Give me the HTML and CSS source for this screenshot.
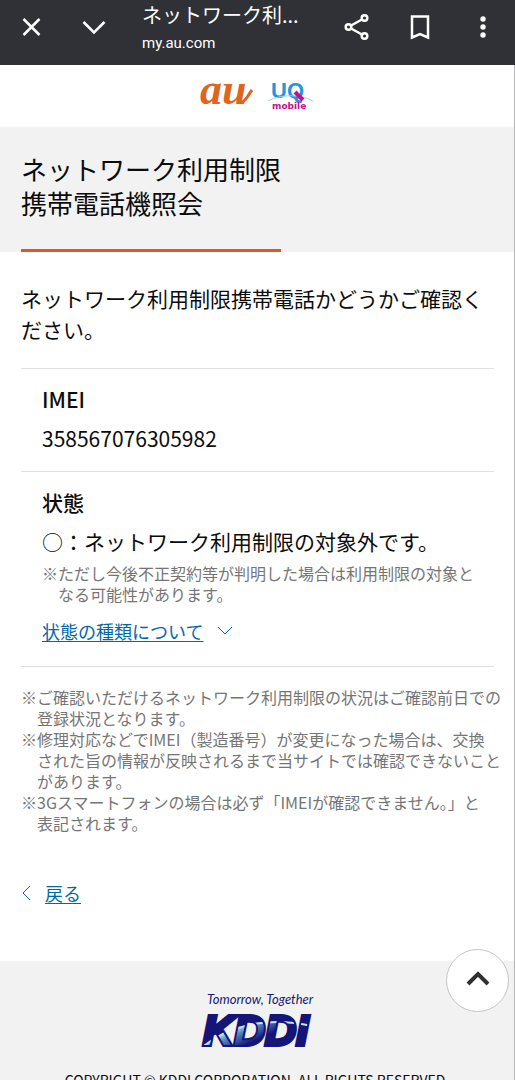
FILE: index.html
```html
<!DOCTYPE html>
<html lang="ja">
<head>
<meta charset="utf-8">
<meta name="viewport" content="width=device-width, initial-scale=1">
<title>ネットワーク利用制限携帯電話機照会</title>
<link rel="stylesheet" href="styles.css">
</head>
<body>
<div class="toolbar">
  <button class="tool" aria-label="閉じる"><svg width="24" height="24" viewBox="0 0 24 24"><path d="M3.500 4L19.500 20M19.500 4L3.500 20"/></svg></button>
  <button class="tool tool-down" aria-label="最小化"><svg width="26" height="24" viewBox="0 0 26 24"><path d="M2.500 7L13 17.500L23.500 7"/></svg></button>
  <div class="page-info">
    <div class="page-name">ネットワーク利...</div>
    <div class="page-host">my.au.com</div>
  </div>
  <div class="tools">
    <button class="tool" aria-label="共有"><svg width="28" height="28" viewBox="0 0 28 28"><path d="M8 12.500L19 6.500M8 15.500L19 21.500"/><circle cx="5.500" cy="14" r="2.800"/><circle cx="21.500" cy="5" r="2.800"/><circle cx="21.500" cy="23" r="2.800"/></svg></button>
    <button class="tool" aria-label="ブックマーク"><svg width="24" height="28" viewBox="0 0 24 28"><path d="M4 3.500H20V24.500L12 21L4 24.500Z"/></svg></button>
    <button class="tool" aria-label="メニュー"><svg class="dots" width="10" height="28" viewBox="0 0 10 28"><circle cx="5" cy="6" r="2.700"/><circle cx="5" cy="14" r="2.700"/><circle cx="5" cy="22" r="2.700"/></svg></button>
  </div>
</div>
<div class="view">
  <header class="brands">
    <svg width="56" height="44" viewBox="0 0 56 44" role="img" aria-label="au"><text class="logo-au" x="0" y="30">au</text><path class="au-tail" d="M41 29C46 27 48 21 52 16"/></svg>
    <svg width="46" height="44" viewBox="0 0 46 44" role="img" aria-label="UQ mobile"><text class="logo-uq" x="3" y="24">UQ</text><path class="uq-line" d="M0 27C12 20 33 20 45 27"/><path class="uq-tail" d="M27 18L35 26"/><text class="logo-mobile" x="4" y="35">mobile</text></svg>
  </header>
  <div class="title-band">
    <h1>ネットワーク利用制限<br>携帯電話機照会</h1>
  </div>
  <main>
    <p class="intro">ネットワーク利用制限携帯電話かどうかご確認ください。</p>
    <dl class="result">
      <div class="item">
        <dt>IMEI</dt>
        <dd>358567076305982</dd>
      </div>
      <div class="item">
        <dt>状態</dt>
        <dd>○：ネットワーク利用制限の対象外です。
          <p class="note">※ただし今後不正契約等が判明した場合は利用制限の対象と<span class="keep">なる</span>可能性があります。</p>
          <a class="kinds" href="#"><span>状態の種類について</span><svg width="16" height="10" viewBox="0 0 16 10"><path d="M1 1L8 8L15 1"/></svg></a>
        </dd>
      </div>
    </dl>
    <ul class="notes">
      <li class="note">※ご確認いただけるネットワーク利用制限の状況はご確認前日での登録状況となります。</li>
      <li class="note">※修理対応などでIMEI（製造番号）が変更になった場合は、交換<span class="keep">された</span>旨の情報が反映されるまで当サイトでは確認できないことがあります。</li>
      <li class="note">※3Gスマートフォンの場合は必ず「IMEIが確認できません。」と<span class="keep">表記</span>されます。</li>
    </ul>
    <a class="back" href="#"><svg width="10" height="16" viewBox="0 0 10 16"><path d="M9 1L2 8L9 15"/></svg><span>戻る</span></a>
  </main>
  <footer>
    <svg width="118" height="56" viewBox="0 0 118 56" role="img" aria-label="Tomorrow, Together KDDI">
      <defs>
        <linearGradient id="glow" gradientUnits="userSpaceOnUse" x1="46" y1="30" x2="55" y2="50"><stop offset="0" stop-color="#b5dcf2"/><stop offset="0.300" stop-color="#5586bf"/><stop offset="0.900" stop-color="#151578"/></linearGradient>
        <clipPath id="wordmark"><text class="logo-kddi" x="5" y="51">KDDI</text></clipPath>
      </defs>
      <text class="tagline" x="9" y="10">Tomorrow, Together</text>
      <text class="logo-kddi" x="5" y="51">KDDI</text>
      <g clip-path="url(#wordmark)">
        <path fill="url(#glow)" d="M3 54C31 31 69 22 114 32V54Z"/>
        <path class="arc" d="M3 54C31 31 69 22 114 32"/>
      </g>
    </svg>
    <small>COPYRIGHT © KDDI CORPORATION, ALL RIGHTS RESERVED.</small>
  </footer>
  <button class="to-top" aria-label="ページの先頭へ"><svg width="26" height="20" viewBox="0 0 26 20"><path d="M3 13L13 3L23 13"/></svg></button>
</div>
</body>
</html>
```
FILE: styles.css
```css
* { box-sizing: border-box; }

body {
  margin: 0;
  height: 100vh;
  display: flex;
  flex-direction: column;
  overflow: hidden;
  background: #fff;
  color: #0c0c0c;
  font-family: "Noto Sans CJK JP", sans-serif;
  font-size: 21px;
}

h1, p, dl, dd, ul { margin: 0; padding: 0; }

button {
  border: 0;
  padding: 0;
  background: none;
  display: flex;
  align-items: center;
  justify-content: center;
}

svg { display: block; flex: none; overflow: visible; }

.toolbar {
  flex: none;
  display: flex;
  align-items: flex-start;
  height: 65px;
  padding: 0 27px 0 20px;
  background: #303136;
  color: #fff;
}

.tool { height: 54px; }
.tool-down { margin-left: 37px; }
.tool path, .tool circle { fill: none; stroke: #fff; stroke-width: 2.5px; }
.tool .dots circle { fill: #fff; stroke: none; }
.page-info { margin-left: 35px; white-space: nowrap; }
.page-name { font-size: 20px; line-height: 30px; }
.page-host { font-family: Roboto, sans-serif; font-size: 15px; line-height: 26px; }
.tools { display: flex; margin-left: auto; gap: 37px; }
.tools .tool + .tool + .tool { margin-left: 9px; }

.view {
  position: relative;
  flex: 1;
  min-height: 0;
  overflow: hidden;
  border-right: 1px solid #b8b8b8;
}

.brands {
  display: flex;
  align-items: center;
  justify-content: center;
  gap: 12px;
  height: 62px;
}

.logo-au { font: italic bold 44px "Liberation Serif", serif; fill: #e0641c; }
.au-tail { fill: none; stroke: #e0641c; stroke-width: 3; }
.logo-uq { font: bold 22px "Liberation Sans", sans-serif; fill: #2496e0; }
.logo-mobile { font: bold 9px "DejaVu Sans", sans-serif; fill: #c8108c; }
.uq-line { fill: none; stroke: #a9cfe4; }
.uq-tail { stroke: #c8108c; stroke-width: 4; }

.title-band { padding: 0 21px; background: #f2f2f2; }

h1 {
  display: inline-block;
  vertical-align: top;
  padding: 25px 0 29px;
  border-bottom: 3px solid #d95a28;
  font-size: 26px;
  font-weight: 400;
  line-height: 34px;
}

main { padding: 31px 20px 0 21px; }
.intro { line-height: 31px; }
.result { margin-top: 23px; border-bottom: 1px solid #e0e0e0; }
.item { border-top: 1px solid #e0e0e0; padding: 14px 21px 17px; }
dt { font-weight: 500; line-height: 32px; }
dd { margin-top: 8px; line-height: 31px; }

.note {
  padding-left: 16px;
  text-indent: -16px;
  color: #757575;
  font-size: 16px;
  line-height: 21px;
}

dd .note { margin: 6px -21px 0 0; }
.keep { white-space: nowrap; }

a { color: #0068a8; font-size: 18px; text-underline-offset: 2px; }
a path { fill: none; stroke: #0068a8; }

.kinds, .back { display: flex; align-items: center; gap: 14px; text-decoration: none; }
.kinds span, .back span { text-decoration: underline; }
.kinds { margin-top: 11px; line-height: 30px; padding-bottom: 3px; }
.notes { margin: 20px -8px 0 0; list-style: none; }
.back { margin-top: 44px; line-height: 30px; }

footer {
  display: flex;
  flex-direction: column;
  align-items: center;
  gap: 20px;
  margin-top: 53px;
  padding: 33px 0 22px;
  background: #f2f2f2;
}

.tagline { font: italic 13px Lato, sans-serif; fill: #171975; }
.logo-kddi { font: italic bold 43px "Liberation Sans", sans-serif; fill: #151578; stroke: #151578; stroke-width: 4; }
.arc { fill: none; stroke: #c4e2f4; stroke-width: 2; }
small { font-size: 14px; line-height: 20px; }

.to-top {
  position: absolute;
  right: 5px;
  top: 884px;
  width: 63px;
  height: 63px;
  border: 1px solid #c4c4c4;
  border-radius: 50%;
  background: #fff;
}

.to-top path { fill: none; stroke: #303030; stroke-width: 4; }
```
